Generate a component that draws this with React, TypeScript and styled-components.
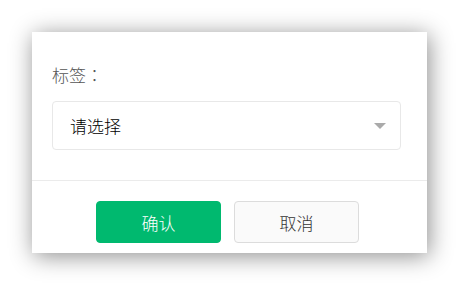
import React from "react";
import styled, { createGlobalStyle } from "styled-components";

const GlobalStyle = createGlobalStyle`
  body {
    margin: 0;
    background: #ffffff;
    font-family: "Noto Sans CJK SC", "Noto Sans", sans-serif;
  }
`;

const Page = styled.div`
  padding: 32px;
`;

const Dialog = styled.div`
  width: 395px;
  height: 221px;
  background: #fff;
  box-shadow: 2px 3px 22px rgba(0, 0, 0, 0.45);
  display: flex;
  flex-direction: column;
`;

const Body = styled.div`
  padding: 31px 0 30px 20px;
  display: flex;
  flex-direction: column;
`;

const Label = styled.div`
  font-size: 17px;
  line-height: 24px;
  font-weight: 300;
  color: #555;
  margin-bottom: 14px;
`;

// centred full-width colon, as in the screenshot
const Colon = styled.span`
  font-family: "Noto Sans CJK TC", sans-serif;
`;

const Select = styled.div`
  width: 349px;
  height: 49px;
  box-sizing: border-box;
  border: 1px solid #e8e8e8;
  border-radius: 4px;
  display: flex;
  align-items: center;
  justify-content: space-between;
  padding: 0 14px 0 17px;
`;

const Placeholder = styled.span`
  font-size: 17px;
  font-weight: 300;
  color: #000;
`;

const Arrow = styled.span`
  width: 0;
  height: 0;
  border-left: 6px solid transparent;
  border-right: 6px solid transparent;
  border-top: 6px solid #aaa;
`;

const Footer = styled.div`
  border-top: 1px solid #ebebeb;
  padding: 20px 0 10px 64px;
  display: flex;
  gap: 13px;
`;

const Button = styled.button<{ $primary?: boolean }>`
  width: 125px;
  height: 42px;
  border-radius: 4px;
  font-family: inherit;
  font-size: 17px;
  font-weight: 300;
  cursor: pointer;
  border: 1px solid ${(p) => (p.$primary ? "#00b96f" : "#dcdcdc")};
  background: ${(p) => (p.$primary ? "#00b96f" : "#fafafa")};
  color: ${(p) => (p.$primary ? "#fff" : "#333")};
`;

export default function App() {
  return (
    <Page>
      <GlobalStyle />
      <Dialog>
        <Body>
          <Label>
            标签<Colon>：</Colon>
          </Label>
          <Select>
            <Placeholder>请选择</Placeholder>
            <Arrow />
          </Select>
        </Body>
        <Footer>
          <Button $primary>确认</Button>
          <Button>取消</Button>
        </Footer>
      </Dialog>
    </Page>
  );
}
